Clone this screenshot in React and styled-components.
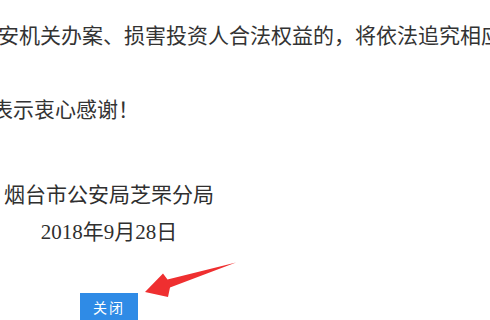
import styled, { createGlobalStyle } from "styled-components"

const GlobalStyle = createGlobalStyle`
    html, body {
        margin: 0;
        padding: 0;
        background: #ffffff;
    }
    #root {
        width: 490px;
        height: 320px;
        overflow: hidden;
    }
`

const Page = styled.div`
    position: relative;
    width: 490px;
    height: 320px;
    overflow: hidden;
    padding-top: 19px;
    box-sizing: border-box;
    background: #ffffff;
    color: #333333;
    font-family: "Noto Sans CJK SC", "Microsoft YaHei", sans-serif;
`

const Line = styled.p`
    margin: 0 0 ${props => props.gap || 0}px ${props => props.shift || 0}px;
    font-size: 21px;
    line-height: 30px;
    white-space: nowrap;
`

// full-width punctuation held in its own em-wide cell
const Punct = styled.span`
    display: inline-block;
    width: 1em;
    text-align: ${props => props.align || "center"};
`

const Signature = styled.div`
    width: 218px;
    text-align: center;
    font-family: "Liberation Serif", "Noto Sans CJK SC", serif;
    font-size: 21px;
    line-height: 37px;
    color: #2f2f2f;
    white-space: nowrap;
`

const Footer = styled.div`
    display: flex;
    padding-left: 80px;
    margin-top: 42px;
`

const CloseButton = styled.button`
    width: 58px;
    height: 34px;
    padding: 0 0 6px;
    border: none;
    border-radius: 0;
    background: #2f8be6;
    color: #ffffff;
    font-family: "Noto Sans CJK SC", sans-serif;
    font-size: 14px;
    letter-spacing: 2px;
    cursor: pointer;
`

const Arrow = styled.svg`
    position: absolute;
    left: 140px;
    top: 258px;
    width: 100px;
    height: 45px;
`

export default function App() {
    return (
        <>
            <GlobalStyle />
            <Page>
                <Line shift={-2} gap={44}>
                    安机关办案<Punct align="left">、</Punct>损害投资人合法权益的<Punct>，</Punct>将依法追究相应法律责任
                </Line>
                <Line shift={-8} gap={54}>
                    表示衷心感谢<Punct align="left">！</Punct>
                </Line>
                <Signature>
                    <div>烟台市公安局芝罘分局</div>
                    <div>2018年9月28日</div>
                </Signature>
                <Footer>
                    <CloseButton>关闭</CloseButton>
                </Footer>
                <Arrow viewBox="140 258 100 45">
                    <polygon
                        points="145,292 163,273.5 167.5,279.5 236,262.5 170,287.5 168,297"
                        fill="#ef2f30"
                    />
                </Arrow>
            </Page>
        </>
    )
}
